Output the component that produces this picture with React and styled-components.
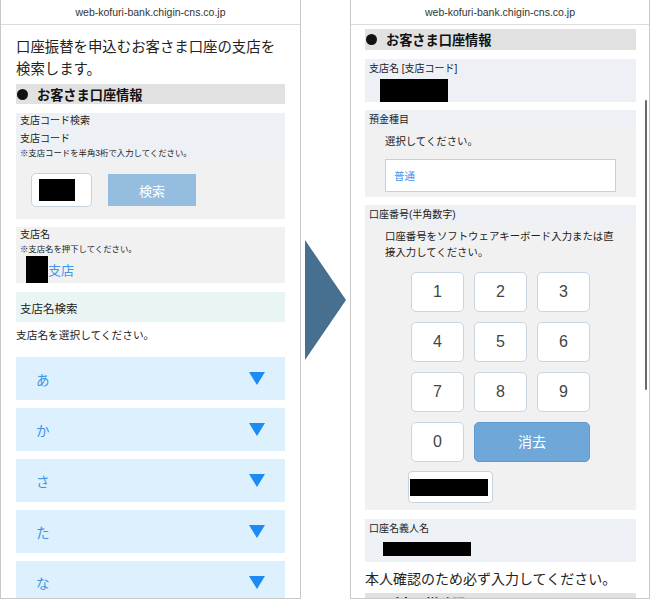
import React from 'react';
import styled, {createGlobalStyle, css} from 'styled-components';

const GlobalStyle = createGlobalStyle`
  html, body {
    margin: 0;
    padding: 0;
    background: #fff;
  }
  body {
    font-family: "Liberation Sans", "Noto Sans CJK JP", sans-serif;
    color: #222;
  }
  *, *::before, *::after {
    box-sizing: border-box;
  }
`;

const Stage = styled.div`
  display: flex;
  width: 650px;
  height: 600px;
  overflow: hidden;
`;

const Phone = styled.div`
  position: relative;
  width: ${({w}) => w || 300}px;
  height: 599px;
  flex: none;
  border: 1px solid #c8c8c8;
  border-top: none;
  overflow: hidden;
  background: #fff;
`;

const UrlBar = styled.div`
  height: 25px;
  line-height: 24px;
  border-bottom: 1px solid #dcdcdc;
  text-align: center;
  font-size: 10.5px;
  color: #333;
`;

const Content = styled.div`
  padding: ${({pad}) => pad || '0 15px'};
  display: flex;
  flex-direction: column;
`;

const Intro = styled.p`
  margin: 11px 0 0;
  font-size: 14.4px;
  line-height: 22px;
  color: #222;
`;

const SectionHead = styled.div`
  display: flex;
  align-items: center;
  height: ${({h}) => h || 20}px;
  margin-top: ${({mt}) => mt || 0}px;
  flex: none;
  background: #e1e1e1;
  font-size: 13.2px;
  font-weight: bold;
  color: #111;
`;

const Dot = styled.span`
  width: 11px;
  height: 11px;
  border-radius: 50%;
  background: #111;
  margin: 0 9px 0 1px;
  flex: none;
`;

const Panel = styled.div`
  margin-top: ${({mt}) => mt || 8}px;
  flex: none;
  background: ${({tone}) => (tone === 'blue' ? '#edf1f5' : '#f1f1f1')};
  display: flex;
  flex-direction: column;
  padding-bottom: ${({pb}) => pb || 0}px;
`;

const PanelLabel = styled.div`
  background: #edf1f5;
  padding: ${({pad}) => pad || '0 4px'};
  font-size: 10px;
  line-height: ${({lh}) => lh || 16}px;
  color: #222;
`;

const Caption = styled.div`
  font-size: 10px;
  line-height: 16px;
  padding: ${({pad}) => pad || '0 4px'};
  margin-top: ${({mt}) => mt || 0}px;
`;

const Note = styled.div`
  font-size: 8.4px;
  line-height: 12px;
  padding: 0 4px;
`;

const CodeRow = styled.div`
  display: flex;
  align-items: center;
  gap: 16px;
  padding: 13px 15px 12px;
`;

const CodeInput = styled.div`
  width: 61px;
  height: 34px;
  background: #fff;
  border: 1px solid #c9d3dc;
  border-radius: 5px;
  display: flex;
  align-items: center;
  padding-left: 7px;
`;

const Masked = styled.div`
  background: #000;
  width: ${({w}) => w}px;
  height: ${({h}) => h}px;
  margin-left: ${({ml}) => ml || 0}px;
  margin-top: ${({mt}) => mt || 0}px;
  flex: none;
`;

const SearchButton = styled.div`
  width: 88px;
  height: 32px;
  background: #95bde0;
  color: #fff;
  font-size: 13px;
  display: flex;
  align-items: center;
  justify-content: center;
`;

const BranchRow = styled.div`
  display: flex;
  align-items: center;
  padding-left: 10px;
  margin-top: 1px;
`;

const LinkText = styled.span`
  color: #3d97f0;
  font-size: ${({size}) => size || 13}px;
`;

const NameSearch = styled.div`
  margin-top: 9px;
  height: 30px;
  flex: none;
  background: #e9f5f5;
  display: flex;
  align-items: center;
  padding: 2px 4px 0;
  font-size: 11.5px;
  color: #222;
`;

const Hint = styled.div`
  margin-top: 5px;
  font-size: 10.7px;
  line-height: 16px;
`;

const KanaList = styled.div`
  margin-top: 14px;
  display: flex;
  flex-direction: column;
  gap: 8px;
`;

const KanaRow = styled.div`
  height: 43px;
  flex: none;
  background: #dcf0fd;
  display: flex;
  align-items: center;
  justify-content: space-between;
  padding: 0 20px;
  font-size: 13.5px;
  color: #3b92e6;
`;

const Caret = styled.span`
  width: 0;
  height: 0;
  border-left: 8px solid transparent;
  border-right: 8px solid transparent;
  border-top: 13px solid #1c8bf2;
`;

const ArrowCol = styled.div`
  width: 49px;
  flex: none;
  display: flex;
  align-items: center;
  padding-left: 4px;
`;

const PanelBody = styled.div`
  padding: ${({pad}) => pad || '0 20px'};
  font-size: 10.4px;
  line-height: 16px;
  display: flex;
  flex-direction: column;
`;

const Select = styled.div`
  margin-top: 9px;
  height: 33px;
  background: #fff;
  border: 1px solid #c5d0dc;
  display: flex;
  align-items: center;
  padding-left: 8px;
`;

const Keypad = styled.div`
  margin-top: 11px;
  display: grid;
  grid-template-columns: repeat(3, 53px);
  grid-auto-rows: 40px;
  gap: 10px;
  justify-content: center;
`;

const Key = styled.div`
  border: 1px solid #c9d5e0;
  border-radius: 5px;
  background: #fff;
  display: flex;
  align-items: center;
  justify-content: center;
  font-size: 16px;
  color: #444;
  ${({wide}) => wide && css`
    grid-column: span 2;
    background: #6fa7d8;
    border-color: #5d9bd2;
    color: #fff;
    font-size: 14px;
  `}
`;

const NumberInput = styled.div`
  margin: 9px 0 0 23px;
  width: 85px;
  height: 32px;
  background: #fff;
  border: 1px solid #c9d3dc;
  border-radius: 4px;
  display: flex;
  align-items: center;
  padding-left: 1px;
`;

const Notice = styled.div`
  margin-top: 7px;
  font-size: 14px;
  line-height: 20px;
  color: #222;
`;

const Scrollbar = styled.div`
  position: absolute;
  right: 2px;
  top: 100px;
  width: 2px;
  height: 290px;
  border-radius: 1px;
  background: #6a6a6a;
`;

const URL = 'web-kofuri-bank.chigin-cns.co.jp';

const LeftScreen = () => (
  <Phone w={301}>
    <UrlBar>{URL}</UrlBar>
    <Content>
      <Intro>口座振替を申込むお客さま口座の支店を<br/>検索します。</Intro>
      <SectionHead mt={4}><Dot/>お客さま口座情報</SectionHead>
      <Panel mt={9}>
        <PanelLabel pad="0 0 1px">
          <Caption>支店コード検索</Caption>
          <Caption mt={2}>支店コード</Caption>
          <Note>※支店コードを半角3桁で入力してください。</Note>
        </PanelLabel>
        <CodeRow>
          <CodeInput><Masked w={36} h={22}/></CodeInput>
          <SearchButton>検索</SearchButton>
        </CodeRow>
      </Panel>
      <Panel mt={8}>
        <Caption>支店名</Caption>
        <Note>※支店名を押下してください。</Note>
        <BranchRow>
          <Masked w={22} h={27}/>
          <LinkText>支店</LinkText>
        </BranchRow>
      </Panel>
      <NameSearch>支店名検索</NameSearch>
      <Hint>支店名を選択してください。</Hint>
      <KanaList>
        {['あ', 'か', 'さ', 'た', 'な'].map(k => (
          <KanaRow key={k}>{k}<Caret/></KanaRow>
        ))}
      </KanaList>
    </Content>
  </Phone>
);

const RightScreen = () => (
  <Phone>
    <UrlBar>{URL}</UrlBar>
    <Content pad="0 13px 0 14px">
      <SectionHead mt={4} h={21}><Dot/>お客さま口座情報</SectionHead>
      <Panel mt={9} tone="blue">
        <Caption pad="2px 4px 0">支店名 [支店コード]</Caption>
        <Masked w={68} h={23} ml={15} mt={2}/>
      </Panel>
      <Panel mt={8}>
        <PanelLabel lh={20}>預金種目</PanelLabel>
        <PanelBody pad="4px 20px 5px">
          選択してください。
          <Select><LinkText size={10.5}>普通</LinkText></Select>
        </PanelBody>
      </Panel>
      <Panel mt={8}>
        <PanelLabel lh={20}>口座番号(半角数字)</PanelLabel>
        <PanelBody pad="4px 20px 7px">
          口座番号をソフトウェアキーボード入力または直<br/>接入力してください。
          <Keypad>
            {['1', '2', '3', '4', '5', '6', '7', '8', '9', '0'].map(n => (
              <Key key={n}>{n}</Key>
            ))}
            <Key wide>消去</Key>
          </Keypad>
          <NumberInput><Masked w={78} h={17}/></NumberInput>
        </PanelBody>
      </Panel>
      <Panel mt={9} tone="blue" pb={6}>
        <Caption pad="2px 4px 0">口座名義人名</Caption>
        <Masked w={88} h={14} ml={18} mt={5}/>
      </Panel>
      <Notice>本人確認のため必ず入力してください。</Notice>
      <SectionHead mt={4} h={21}><Dot/>ご本人様確認</SectionHead>
    </Content>
    <Scrollbar/>
  </Phone>
);

const App = () => (
  <>
    <GlobalStyle/>
    <Stage>
      <LeftScreen/>
      <ArrowCol>
        <svg width="41" height="120" viewBox="0 0 41 120">
          <polygon points="0,0 41,60 0,120" fill="#476f90"/>
        </svg>
      </ArrowCol>
      <RightScreen/>
    </Stage>
  </>
);

export default App;
